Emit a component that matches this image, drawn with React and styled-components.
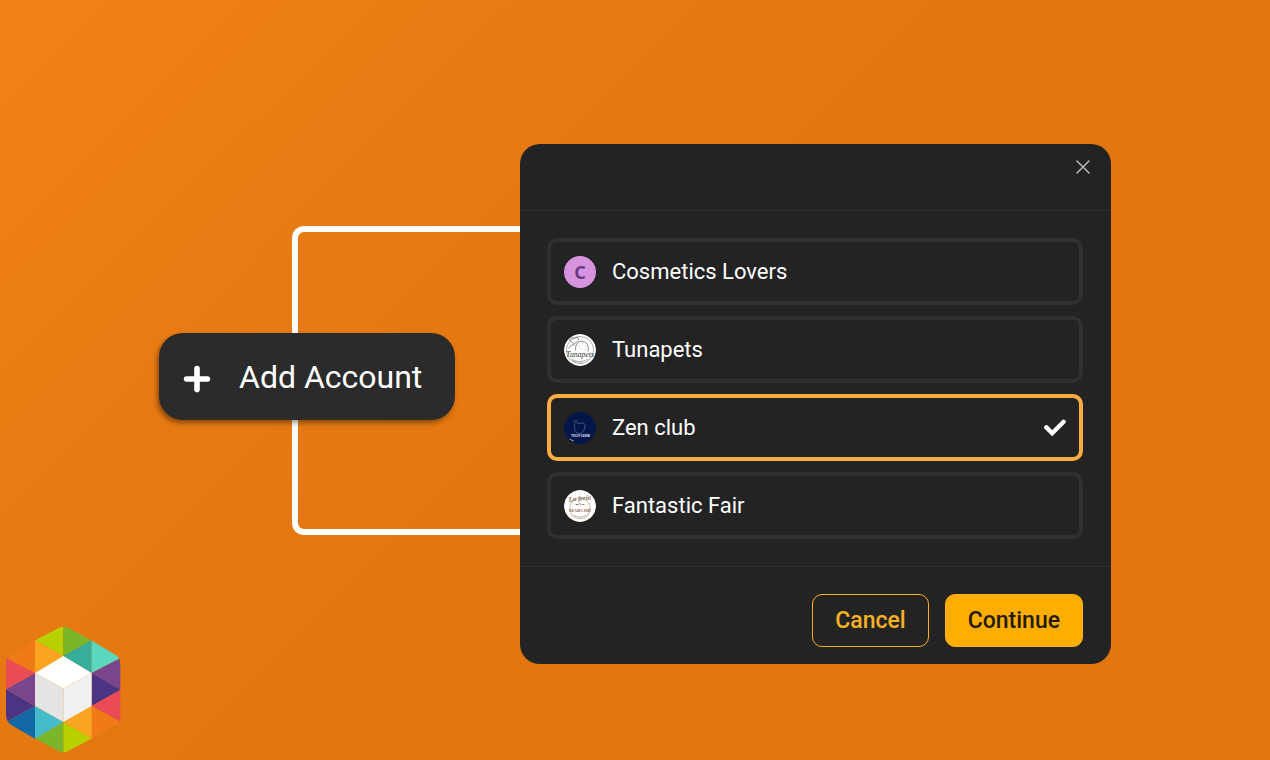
import React, { useState } from 'react'
import styled, { createGlobalStyle } from 'styled-components';

const accounts = [
  { id: 'cosmetics', name: 'Cosmetics Lovers' },
  { id: 'tunapets', name: 'Tunapets' },
  { id: 'zen', name: 'Zen club' },
  { id: 'fair', name: 'Fantastic Fair' },
]

const triangles = [
  ['#b8d000', '105,75 190,30 190,122'],
  ['#7ab52a', '190,30 275,75 190,122'],
  ['#f9a522', '105,75 190,122 105,173'],
  ['#f07a18', '105,75 20,128 105,173'],
  ['#35ae9b', '190,122 275,75 275,173'],
  ['#5ad7bd', '275,75 362,128 275,173'],
  ['#7a458a', '275,173 362,128 362,223'],
  ['#4c3485', '275,173 362,223 275,272'],
  ['#ea4c54', '275,272 362,223 362,320'],
  ['#f07a18', '275,272 362,320 275,370'],
  ['#f9a522', '275,272 275,370 190,320'],
  ['#b8d000', '190,320 275,370 190,414'],
  ['#7ab52a', '190,320 190,414 105,370'],
  ['#45bcca', '105,272 190,320 105,370'],
  ['#1269a5', '105,272 105,370 18,320'],
  ['#4c3485', '18,222 105,272 18,320'],
  ['#7a458a', '18,222 105,173 105,272'],
  ['#ea4c54', '18,128 105,173 18,222'],
  ['#ffffff', '105,173 190,122 275,173 190,220'],
  ['#e4e4e4', '105,173 190,220 190,320 105,272'],
  ['#f1f1f1', '275,173 190,220 190,320 275,272'],
]

const HexLogo = () => (
  <LogoSvg viewBox="12 26 354 390" role="img" aria-label="Logo">
    <clipPath id="hex">
      <path d="M160 44Q190 24 220 44L338 112Q362 124 362 148V300Q362 316 354 324L220 402Q190 424 160 402L44 338Q18 322 18 298V127L105 75Z" />
    </clipPath>
    <g clipPath="url(#hex)">
      {triangles.map(([fill, points]) => <polygon key={points} fill={fill} points={points} />)}
    </g>
  </LogoSvg>
)

const Avatar = ({ id }) => {
  if (id === 'cosmetics') return <Letter aria-hidden="true">C</Letter>
  return (
    <AvatarSvg viewBox="0 0 33 33" aria-hidden="true">
      {id === 'tunapets' && (
        <g fill="none" stroke="#555" strokeWidth="0.7">
          <circle cx="16.5" cy="16.5" r="16.5" fill="#fff" stroke="none" />
          <circle cx="16.5" cy="16.5" r="14" stroke="#888" />
          <path d="M12 17V14a6 6 0 0 1 13 0v4M11 10c-4-2-6-3-4-5 1-2 3-1 4 0 2-3 5-1 4 1s-3 3-4 4zM5 15c1-3 3-4 6-4" />
          <path stroke="#888" d="M15 12h1M19 10h1M22 13h1M17 15h1M21 16h1M9 28h4M15 30h4M8 26q7 5 17 0" />
          <text x="16.5" y="24" textAnchor="middle" fontSize="8" fill="#333" stroke="none" fontStyle="italic" fontFamily="Liberation Serif, serif">Tunapets</text>
        </g>
      )}
      {id === 'zen' && (
        <g fill="none">
          <circle cx="16.5" cy="16.5" r="16.5" fill="#03164a" />
          <path stroke="#667394" strokeWidth="0.7" d="M11 13l2-2 3 1 3-1 3 2-1 5-3 4h-4l-3-3zM10 11q1-3 4-2" />
          <text x="17" y="26" textAnchor="middle" fontSize="3.5" fontWeight="700" fill="#d8deec" fontFamily="Roboto, sans-serif">TECH YARNI</text>
          <path stroke="#aeb7cc" strokeWidth="1" d="M6 28l2 1 2 1" />
        </g>
      )}
      {id === 'fair' && (
        <g fill="none">
          <circle cx="16.5" cy="16.5" r="16.5" fill="#fff" />
          <circle cx="16.5" cy="19" r="10.5" stroke="#c3b5a6" strokeWidth="1.2" strokeDasharray="2 0.6" />
          <text x="16.5" y="11" textAnchor="middle" fontSize="7" fontStyle="italic" fontWeight="700" fill="#8a6a55" fontFamily="Liberation Serif, serif" transform="rotate(-6 16 10)">La feria</text>
          <path stroke="#8a6a55" d="M12 15h3M16 14l2 1M19 15h2" />
          <text x="16.5" y="23" textAnchor="middle" fontSize="5" fontWeight="700" fill="#8a6a55" fontFamily="Liberation Serif, serif">MARCHÉ</text>
          <path stroke="#c3b5a6" d="M10 26q6 4 13 0" />
        </g>
      )}
    </AvatarSvg>
  )
}

const App = () => {
  const [selected, setSelected] = useState('zen')

  return (
    <Page>
      <GlobalStyle />
      <HexLogo />
      <Launcher>
        <Connector />
        <AddButton type="button">
          <svg width="28" height="32" viewBox="0 0 28 32" stroke="#fff" strokeWidth="5.6" strokeLinecap="round" aria-hidden="true">
            <path d="M14 7.6v20.8M3.6 18h20.8" />
          </svg>
          Add Account
        </AddButton>
      </Launcher>
      <Modal role="dialog" aria-label="Add Account">
        <Header>
          <CloseButton type="button" aria-label="Close">
            <svg width="14" height="14" viewBox="0 0 14 14" stroke="#b4b4b4" strokeWidth="1.6" strokeLinecap="round">
              <path d="M1 1l12 12M13 1L1 13" />
            </svg>
          </CloseButton>
        </Header>
        <AccountList>
          {accounts.map(({ id, name }) => (
            <AccountRow key={id} htmlFor={id} $active={selected === id}>
              <Radio type="radio" name="account" id={id} checked={selected === id} onChange={() => setSelected(id)} />
              <Avatar id={id} />
              <AccountName>{name}</AccountName>
              {selected === id && (
                <svg width="22" height="18" viewBox="0 0 22 18" fill="none" stroke="#fff" strokeWidth="4.4" strokeLinecap="round" aria-hidden="true">
                  <path d="M2.4 8.4l5.8 5.8L19.6 2.8" />
                </svg>
              )}
            </AccountRow>
          ))}
        </AccountList>
        <Footer>
          <Button type="button">Cancel</Button>
          <Button type="button" $primary>Continue</Button>
        </Footer>
      </Modal>
    </Page>
  )
}

const GlobalStyle = createGlobalStyle`
  *{
    box-sizing: border-box;
  }
  body{
    margin: 0;
    font-family: Roboto, "Liberation Sans", sans-serif;
  }
  button{
    font-family: inherit;
    cursor: pointer;
  }
`;

const Page = styled.main`
  display: flex;
  align-items: center;
  min-height: 100vh;
  padding: 48px 159px 0 4px;
  background: linear-gradient(135deg, #f28319 0%, #e87a13 28%, #e1750f 55%, #e1750f 100%);
`;

const LogoSvg = styled.svg`
  flex: none;
  align-self: flex-end;
  width: 118px;
  height: 130px;
  margin: 0 37px 6px 0;
`;

const Launcher = styled.div`
  display: grid;
  flex: none;
  width: 361px;
  align-items: center;
  margin-bottom: 47px;
`;

const Connector = styled.div`
  grid-area: 1 / 1;
  height: 309px;
  margin-left: 133px;
  border: 6px solid #fff;
  border-right: 0;
  border-radius: 12px 0 0 12px;
`;

const AddButton = styled.button`
  grid-area: 1 / 1;
  z-index: 1;
  display: flex;
  align-items: center;
  justify-self: start;
  gap: 28px;
  height: 87px;
  margin-bottom: 8px;
  padding: 0 33px 0 24px;
  border: 0;
  border-radius: 24px;
  background: #2b2b2b;
  box-shadow: -2px 3px 5px rgba(0, 0, 0, 0.4);
  color: #fff;
  font-size: 32px;
  white-space: nowrap;
`;

const Modal = styled.section`
  flex: 1;
  border-radius: 20px;
  background: #232323;
`;

const Header = styled.header`
  display: flex;
  justify-content: flex-end;
  align-items: flex-start;
  height: 67px;
  padding: 12px 17px;
  border-bottom: 1px solid #303030;
`;

const CloseButton = styled.button`
  display: flex;
  padding: 4px;
  border: 0;
  background: none;
`;

const AccountList = styled.div`
  display: grid;
  gap: 11px;
  padding: 27px 28px 27px 27px;
`;

const AccountRow = styled.label`
  display: flex;
  align-items: center;
  gap: 16px;
  height: 67px;
  padding: 0 13px;
  border: 4px solid ${({ $active }) => ($active ? '#f9ac40' : '#303030')};
  border-radius: 10px;
  cursor: pointer;
`;

const Radio = styled.input`
  position: absolute;
  opacity: 0;
  pointer-events: none;
`;

const Letter = styled.span`
  display: grid;
  place-items: center;
  width: 32px;
  height: 32px;
  border-radius: 50%;
  background: #d694dc;
  color: #6b3a86;
  font-family: "Noto Sans", sans-serif;
  font-size: 18px;
  font-weight: 700;
`;

const AvatarSvg = styled.svg`
  width: 32px;
  height: 32px;
  border-radius: 50%;
`;

const AccountName = styled.span`
  flex: 1;
  color: #fff;
  font-size: 22px;
`;

const Footer = styled.footer`
  display: flex;
  justify-content: flex-end;
  gap: 16px;
  padding: 27px 28px 17px;
  border-top: 1px solid #303030;
`;

const Button = styled.button`
  height: 53px;
  padding: 0 22px;
  border: 1px solid #ffb020;
  border-radius: 10px;
  background: ${({ $primary }) => ($primary ? '#ffae00' : 'transparent')};
  color: ${({ $primary }) => ($primary ? '#231a08' : '#f9b125')};
  font-size: 23px;
  font-weight: 500;
`;

export default App
